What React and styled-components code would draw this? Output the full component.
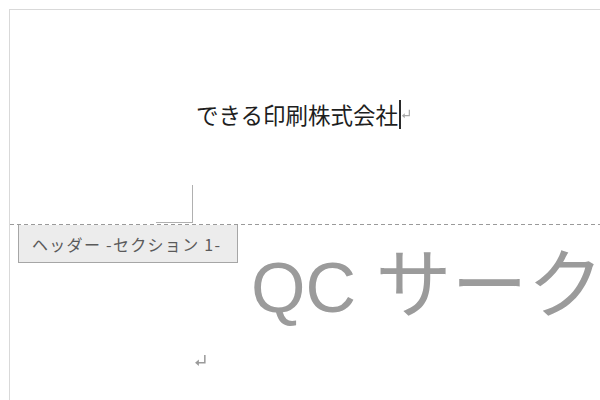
import styled, { createGlobalStyle } from 'styled-components';

const GlobalStyle = createGlobalStyle`
  html, body {
    margin: 0;
    padding: 0;
    background: #ffffff;
    overflow: hidden;
  }
`;

const Canvas = styled.div`
  width: 600px;
  height: 400px;
  padding: 9px 0 0 9px;
  box-sizing: border-box;
  background: #ffffff;
  overflow: hidden;
`;

const Page = styled.div`
  width: 700px;
  height: 420px;
  border-top: 1px solid #d9d9d9;
  border-left: 1px solid #d9d9d9;
  background: #ffffff;
  display: flex;
  flex-direction: column;
`;

const HeaderZone = styled.div`
  height: 213px;
  display: flex;
  flex-direction: column;
  justify-content: space-between;
  padding-top: 88px;
  box-sizing: border-box;
`;

const HeaderLine = styled.div`
  display: flex;
  align-items: center;
  padding-left: 186px;
  font-family: "Noto Sans CJK JP", sans-serif;
  font-size: 22.5px;
  line-height: 32px;
  color: #1e1e1e;
`;

const Caret = styled.span`
  display: inline-block;
  width: 2px;
  height: 29px;
  margin-left: 1px;
  background: #2a2a2a;
`;

const CropMark = styled.div`
  margin-left: 146px;
  width: 36px;
  height: 37px;
  border-right: 1px solid #b0b0b0;
  border-bottom: 1px solid #b0b0b0;
`;

const DashedRule = styled.div`
  height: 1px;
  margin-top: 1px;
  background: repeating-linear-gradient(to right, #9a9a9a 0 4px, transparent 4px 7px);
`;

const BodyRow = styled.div`
  display: flex;
  align-items: flex-start;
  height: 94px;
`;

const SectionTab = styled.div`
  margin-left: 8px;
  width: 220px;
  height: 38px;
  box-sizing: border-box;
  background: #ececec;
  border: 1px solid #a6a6a6;
  border-top: none;
  padding-left: 13px;
  display: flex;
  align-items: center;
  font-family: "Noto Sans CJK JP", sans-serif;
  font-size: 16px;
  letter-spacing: 1.3px;
  color: #5a5a5a;
  white-space: nowrap;
`;

const WatermarkText = styled.div`
  margin-left: 13px;
  margin-top: 14px;
  height: 80px;
  font-family: "Liberation Sans", "Noto Sans CJK JP", sans-serif;
  font-size: 70px;
  line-height: 80px;
  color: #9b9b9b;
  white-space: nowrap;
`;

const WatermarkKana = styled.span`
  font-family: "Noto Sans CJK JP", sans-serif;
  font-size: 76px;
`;

const BodyLine = styled.div`
  padding-left: 184px;
  margin-top: 33px;
  height: 16px;
  display: flex;
  align-items: center;
`;

function ReturnMark({ size = 12, color = '#9a9a9a' }) {
  return (
    <svg width={size} height={size} viewBox="0 0 12 12" fill="none">
      <path d="M10 1 V8 H3" stroke={color} strokeWidth="1.4" />
      <path d="M1 8 L4.5 5 V11 Z" fill={color} />
    </svg>
  );
}

function App() {
  return (
    <>
      <GlobalStyle />
      <Canvas>
        <Page>
          <HeaderZone>
            <HeaderLine>
              できる印刷株式会社
              <Caret />
              <ReturnMark size={10} color="#a8a8a8" />
            </HeaderLine>
            <CropMark />
          </HeaderZone>
          <DashedRule />
          <BodyRow>
            <SectionTab>ヘッダー -セクション 1-</SectionTab>
            <WatermarkText>
              QC <WatermarkKana>サークル</WatermarkKana>
            </WatermarkText>
          </BodyRow>
          <BodyLine>
            <ReturnMark size={13} />
          </BodyLine>
        </Page>
      </Canvas>
    </>
  );
}

export default App;
